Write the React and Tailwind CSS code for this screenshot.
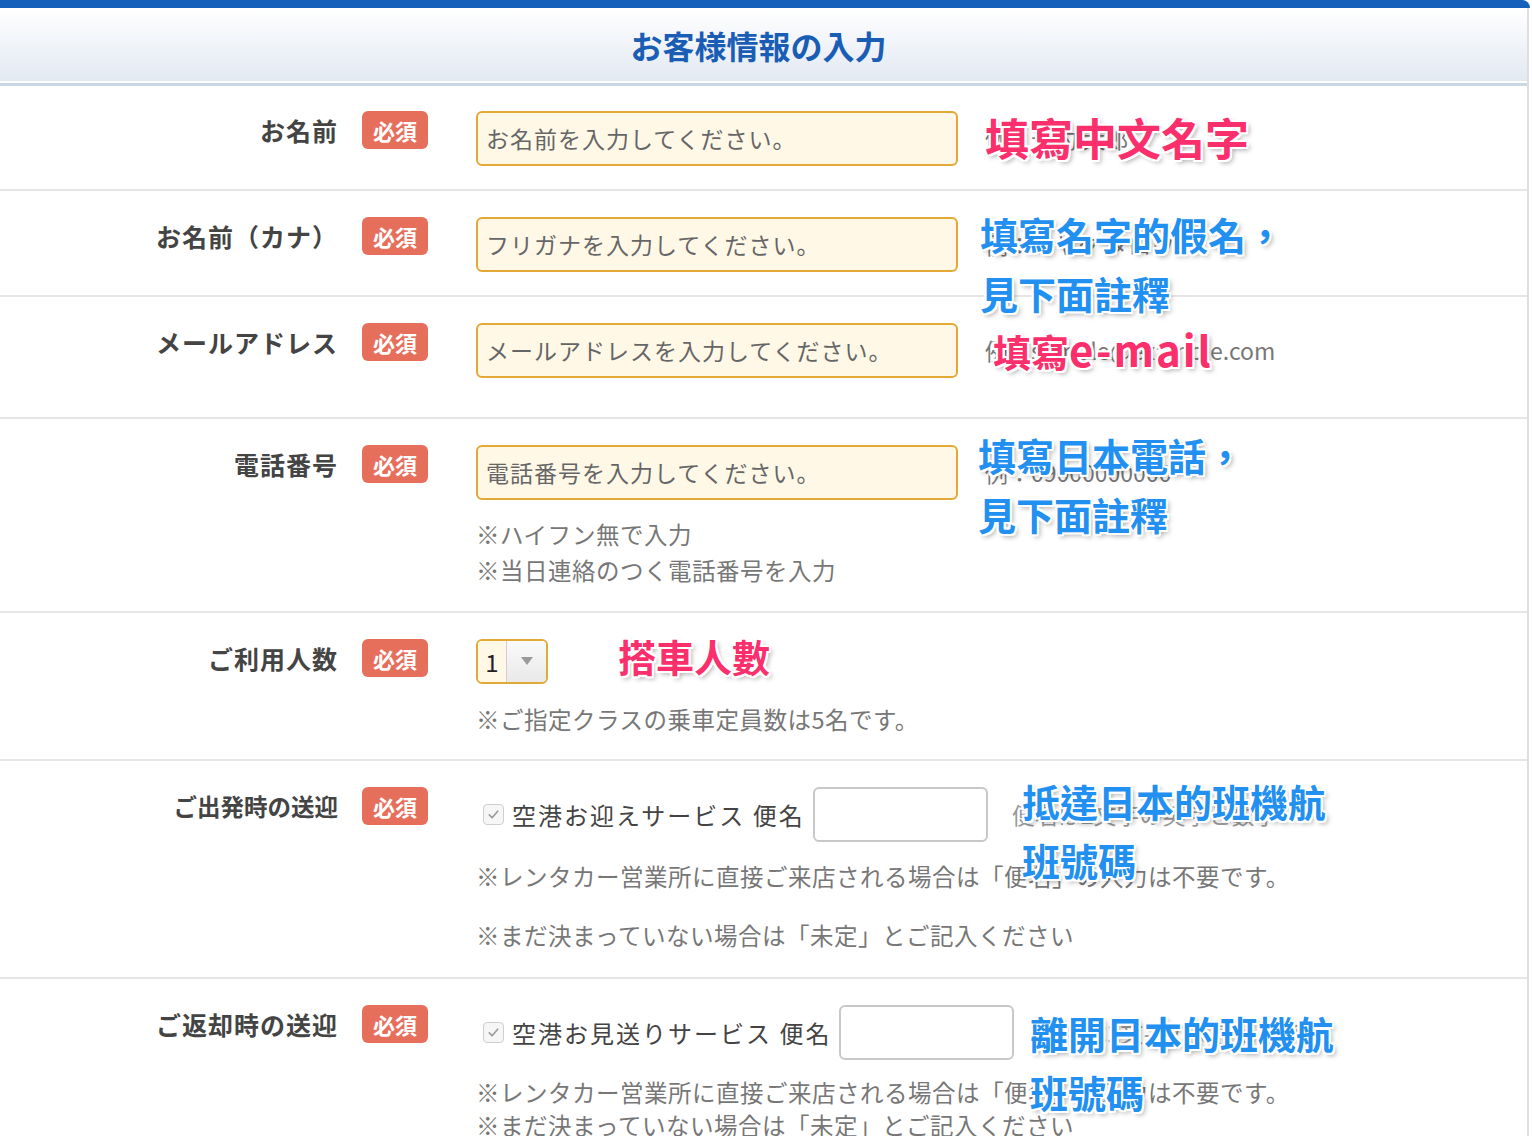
import React from 'react';

const jp = { fontFamily: '"Noto Sans CJK JP", "Noto Sans", sans-serif' };
const tc = { fontFamily: '"Noto Sans CJK TC", "Noto Sans CJK JP", sans-serif' };

const outline =
  '[text-shadow:0_0_2px_#fff,2px_0_0_#fff,-2px_0_0_#fff,0_2px_0_#fff,0_-2px_0_#fff,2px_2px_0_#fff,-2px_-2px_0_#fff,2px_-2px_0_#fff,-2px_2px_0_#fff,3px_3px_5px_rgba(0,0,0,0.35)]';

function Note({ text, top, left, color, size = 'text-[38px]' }) {
  // overlay annotation drawn on top of the form
  return (
    <div
      style={{ ...tc, top, left }}
      className={`absolute z-10 whitespace-nowrap font-bold leading-none ${size} ${color} ${outline}`}
    >
      {text}
    </div>
  );
}

function Badge() {
  return (
    <div className="flex h-[38px] w-[66px] shrink-0 items-center justify-center rounded-md bg-[#e66f5c] text-[22px] font-bold text-white">
      必須
    </div>
  );
}

function Row({ label, labelSize = 'text-[25px] tracking-[1px]', height, pad = 'pt-[26px]', children, notes }) {
  return (
    <div className={`relative flex border-b-2 border-[#e6e6e6] ${height} ${pad}`}>
      <div className={`h-[38px] w-[338px] shrink-0 text-right font-bold leading-[38px] text-[#444] ${labelSize}`}>
        {label}
      </div>
      <div className="ml-[24px]">
        <Badge />
      </div>
      <div className="ml-[48px] flex flex-col">{children}</div>
      {notes}
    </div>
  );
}

function TextInput({ placeholder, ghost }) {
  return (
    <div className="flex items-center gap-[27px]">
      <div className="flex h-[55px] w-[482px] items-center rounded-md border-2 border-[#e2a935] bg-[#fff8e6] px-[8px] text-[23px] tracking-[1px] text-[#666]">
        {placeholder}
      </div>
      {ghost && <div className="whitespace-nowrap text-[23px] text-[#777]">{ghost}</div>}
    </div>
  );
}

function Hint({ children, className = 'leading-[36px]' }) {
  return <div className={`whitespace-nowrap text-[23.5px] tracking-[0.5px] text-[#777] ${className}`}>{children}</div>;
}

function Check() {
  return (
    <div className="flex h-[21px] w-[21px] items-center justify-center rounded border border-[#cfcfcf] bg-[#f6f6f6]">
      <svg width="13" height="13" viewBox="0 0 14 14" fill="none">
        <path d="M2.5 7.5 L5.5 10.5 L11.5 3.5" stroke="#9a9a9a" strokeWidth="1.8" strokeLinecap="round" strokeLinejoin="round" />
      </svg>
    </div>
  );
}

function FlightLine({ label, ghost }) {
  return (
    <div className="flex h-[55px] items-center">
      <div className="ml-[7px]">
        <Check />
      </div>
      <span className="ml-[8px] whitespace-nowrap text-[24px] tracking-[2px] text-[#444]">{label}</span>
      <div className="ml-[8px] h-[55px] w-[175px] rounded-md border-2 border-[#c8c8c8] bg-white" />
      {ghost && <span className="ml-[24px] whitespace-nowrap text-[23px] text-[#999]">{ghost}</span>}
    </div>
  );
}

const pink = 'text-[#fb2f6c]';
const blue = 'text-[#2290f0]';

export default function App() {
  return (
    <div style={jp} className="w-[1532px] bg-white">
      <div className="h-[1136px] w-[1530px] overflow-hidden">
        <div className="h-[8px] w-[1530px] rounded-tr-[10px] bg-[#1560bb]" />
        <div className="w-[1529px] border-r-2 border-[#dedede]">
          <div className="flex h-[73px] items-center justify-center bg-gradient-to-b from-white to-[#e2e9f2]">
            <h1 className="mr-[10px] text-[32px] font-bold text-[#1a5db5]">お客様情報の入力</h1>
          </div>
          <div className="h-[2px] bg-white" />
          <div className="h-[3px] bg-[#c9d7e5]" />

          <Row
            label="お名前"
            height="h-[105px]"
            pad="pt-[25px]"
            notes={<Note text="填寫中文名字" top={29} left={985} color={pink} size="text-[44px]" />}
          >
            <TextInput placeholder="お名前を入力してください。" ghost="例：予約 太郎" />
          </Row>

          <Row
            label="お名前（カナ）"
            height="h-[106px]"
            notes={
              <>
                <Note text="填寫名字的假名，" top={24} left={980} color={blue} />
                <Note text="見下面註釋" top={83} left={980} color={blue} />
              </>
            }
          >
            <TextInput placeholder="フリガナを入力してください。" ghost="例：ヨヤク タロウ" />
          </Row>

          <Row
            label="メールアドレス"
            height="h-[122px]"
            notes={
              <Note
                text={
                  <>
                    填寫<span className="text-[42px] tracking-[2px]">e-mail</span>
                  </>
                }
                top={31}
                left={993}
                color={pink}
              />
            }
          >
            <TextInput placeholder="メールアドレスを入力してください。" ghost="例：sample@example.com" />
          </Row>

          <Row
            label="電話番号"
            height="h-[194px]"
            notes={
              <>
                <Note text="填寫日本電話，" top={17} left={978} color={blue} />
                <Note text="見下面註釋" top={76} left={978} color={blue} />
              </>
            }
          >
            <TextInput placeholder="電話番号を入力してください。" ghost="例：09000000000" />
            <div className="mt-[16px]">
              <Hint>※ハイフン無で入力</Hint>
              <Hint>※当日連絡のつく電話番号を入力</Hint>
            </div>
          </Row>

          <Row
            label="ご利用人数"
            height="h-[148px]"
            notes={<Note text="搭車人數" top={24} left={618} color={pink} />}
          >
            <div className="flex h-[45px] w-[72px] overflow-hidden rounded-md border-2 border-[#e2a935]">
              <div className="flex w-[28px] items-center justify-center bg-[#fff8e6] text-[24px] text-[#222]">1</div>
              <div className="flex flex-1 items-center justify-center border-l border-[#cfcfcf] bg-gradient-to-b from-[#fafafa] to-[#e9e9e9]">
                <svg width="12" height="9" viewBox="0 0 12 9">
                  <path d="M0 0 H12 L6 8 Z" fill="#9a9a9a" />
                </svg>
              </div>
            </div>
            <div className="mt-[17px]">
              <Hint>※ご指定クラスの乗車定員数は5名です。</Hint>
            </div>
          </Row>

          <Row
            label="ご出発時の送迎"
            labelSize="text-[23.5px]"
            height="h-[218px]"
            notes={
              <>
                <Note text="抵達日本的班機航" top={21} left={1022} color={blue} />
                <Note text="班號碼" top={80} left={1022} color={blue} />
              </>
            }
          >
            <FlightLine label="空港お迎えサービス 便名" ghost="便名は2文字の英字と数字" />
            <div className="mt-[16px]">
              <Hint>※レンタカー営業所に直接ご来店される場合は「便名」の入力は不要です。</Hint>
              <Hint className="mt-[23px] leading-[36px]">※まだ決まっていない場合は「未定」とご記入ください</Hint>
            </div>
          </Row>

          <Row
            label="ご返却時の送迎"
            height="h-[170px]"
            notes={
              <>
                <Note text="離開日本的班機航" top={35} left={1030} color={blue} />
                <Note text="班號碼" top={94} left={1030} color={blue} />
              </>
            }
          >
            <FlightLine label="空港お見送りサービス 便名" ghost="便名は2文字の英字と数字" />
            <div className="mt-[16px]">
              <Hint className="leading-[33px]">※レンタカー営業所に直接ご来店される場合は「便名」の入力は不要です。</Hint>
              <Hint className="leading-[33px]">※まだ決まっていない場合は「未定」とご記入ください</Hint>
            </div>
          </Row>
        </div>
      </div>
    </div>
  );
}
